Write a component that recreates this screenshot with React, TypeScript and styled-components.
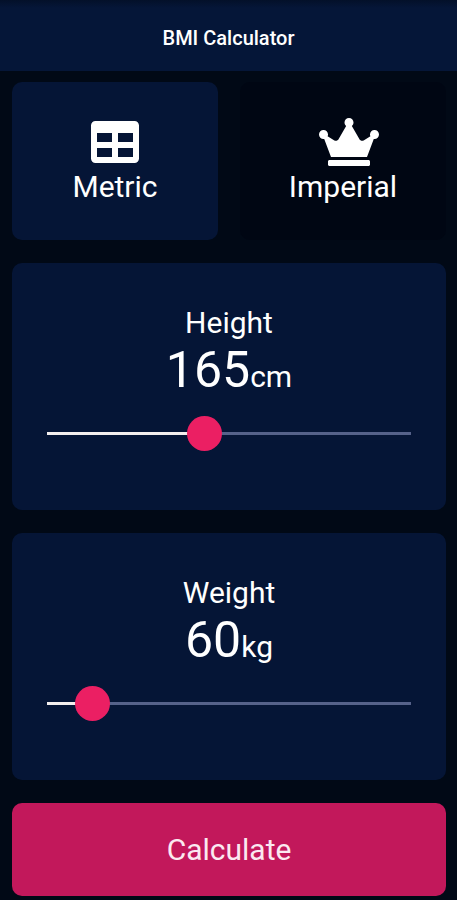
import React, { useState } from "react";
import styled, { createGlobalStyle } from "styled-components";
import { FaCrown, FaTable } from "react-icons/fa";

const GlobalStyle = createGlobalStyle`
  *, *::before, *::after { box-sizing: border-box; }
  body {
    margin: 0;
    background: #010916;
    color: #fff;
    font-family: Roboto, "Liberation Sans", sans-serif;
  }
`;

const Page = styled.div`
  display: flex;
  flex-direction: column;
  min-height: 100vh;
`;

const TopBar = styled.header`
  display: flex;
  align-items: center;
  justify-content: center;
  height: 71px;
  padding-top: 5px;
  background: linear-gradient(#031029, #051638 8px);
`;

const Title = styled.h1`
  margin: 0;
  font-size: 20px;
  line-height: 24px;
  font-weight: 500;
`;

const Content = styled.main`
  display: flex;
  flex-direction: column;
  gap: 23px;
  padding: 11px 11px 4px 12px;
`;

const UnitRow = styled.div`
  display: grid;
  grid-template-columns: 1fr 1fr;
  gap: 22px;
`;

const UnitButton = styled.button<{ $active: boolean }>`
  display: flex;
  flex-direction: column;
  align-items: center;
  gap: 3px;
  padding: 36px 8px;
  border: 0;
  border-radius: 10px;
  background: ${(p) => (p.$active ? "#051536" : "#000613")};
  color: #fff;
  font: inherit;
  font-size: 30px;
  line-height: 35px;
  cursor: pointer;
`;

const IconBox = styled.span<{ $glyphWidth: number }>`
  display: flex;
  width: 48px;
  height: 48px;

  svg {
    flex: none;
    width: ${(p) => p.$glyphWidth}px;
    height: 48px;
  }
`;

const Card = styled.section`
  display: flex;
  flex-direction: column;
  align-items: center;
  padding: 42px 18px 45px;
  border-radius: 10px;
  background: #051536;
`;

const CardLabel = styled.label`
  font-size: 30px;
  line-height: 35px;
`;

const Reading = styled.output`
  font-size: 50px;
  line-height: 61px;
`;

const Unit = styled.span`
  font-size: 30px;
  line-height: 35px;
`;

const Slider = styled.input`
  --track: calc(100% - 34px) 3px;
  appearance: none;
  width: 100%;
  height: 64px;
  margin: 0;
  background:
    linear-gradient(
      to right,
      #f3eeee var(--fill),
      #56628a var(--fill)
    )
    center / var(--track) no-repeat;
  cursor: pointer;

  &::-webkit-slider-thumb {
    appearance: none;
    width: 35px;
    height: 35px;
    border-radius: 50%;
    background: #eb1f63;
  }

  &::-moz-range-thumb {
    width: 35px;
    height: 35px;
    border: 0;
    border-radius: 50%;
    background: #eb1f63;
  }
`;

const CalculateButton = styled.button`
  padding: 29px 16px;
  border: 0;
  border-radius: 10px;
  background: #c2185b;
  color: #fbe9f1;
  font: inherit;
  font-size: 30px;
  line-height: 35px;
  cursor: pointer;
`;

type MeasureProps = {
  id: string;
  label: string;
  unit: string;
  min: number;
  max: number;
  value: number;
  factor: number;
  onChange: (value: number) => void;
};

function Measure({ id, label, unit, min, max, value, factor, onChange }: MeasureProps) {
  const fill = ((value - min) / (max - min)) * 100;
  return (
    <Card>
      <CardLabel htmlFor={id}>{label}</CardLabel>
      <Reading htmlFor={id}>
        {Math.round(value * factor)}
        <Unit>{unit}</Unit>
      </Reading>
      <Slider
        id={id}
        type="range"
        min={min}
        max={max}
        value={value}
        onChange={(e) => onChange(Number(e.target.value))}
        style={{ "--fill": `${fill}%` } as React.CSSProperties}
      />
    </Card>
  );
}

export default function App() {
  const [metric, setMetric] = useState(true);
  const [height, setHeight] = useState(165);
  const [weight, setWeight] = useState(60);

  return (
    <>
      <GlobalStyle />
      <Page>
        <TopBar>
          <Title>BMI Calculator</Title>
        </TopBar>
        <Content>
          <UnitRow>
            <UnitButton type="button" $active={metric} aria-pressed={metric} onClick={() => setMetric(true)}>
              <IconBox $glyphWidth={48}><FaTable aria-hidden /></IconBox>
              Metric
            </UnitButton>
            <UnitButton type="button" $active={!metric} aria-pressed={!metric} onClick={() => setMetric(false)}>
              <IconBox $glyphWidth={60}><FaCrown aria-hidden /></IconBox>
              Imperial
            </UnitButton>
          </UnitRow>
          <Measure
            id="height"
            label="Height"
            unit={metric ? "cm" : "in"}
            min={100}
            max={250}
            value={height}
            factor={metric ? 1 : 0.3937}
            onChange={setHeight}
          />
          <Measure
            id="weight"
            label="Weight"
            unit={metric ? "kg" : "lb"}
            min={40}
            max={200}
            value={weight}
            factor={metric ? 1 : 2.2046}
            onChange={setWeight}
          />
          <CalculateButton type="button">Calculate</CalculateButton>
        </Content>
      </Page>
    </>
  );
}
